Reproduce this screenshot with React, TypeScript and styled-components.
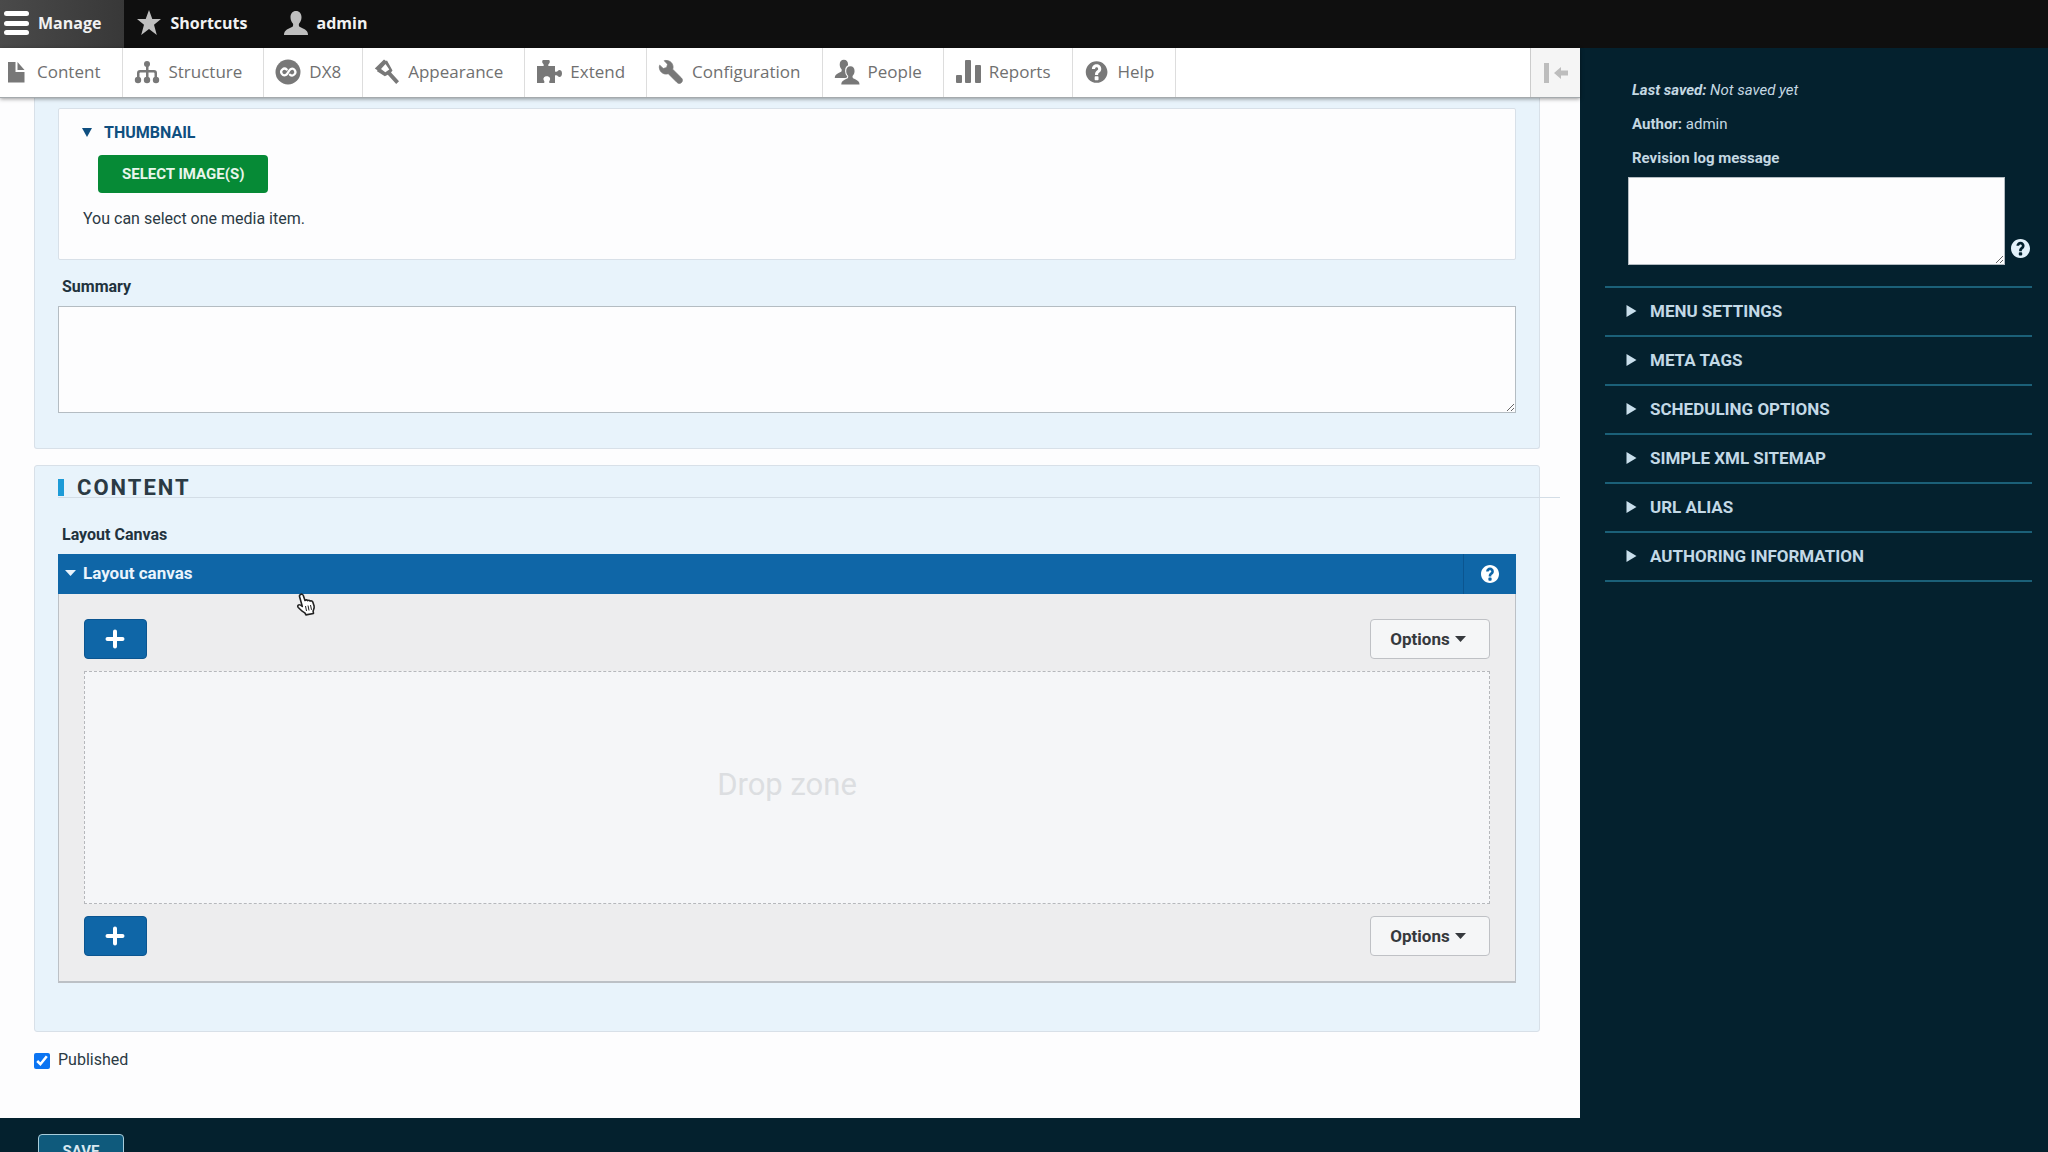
import React from "react";
import styled, { createGlobalStyle } from "styled-components";

const ui = `Roboto, "Liberation Sans", sans-serif`;
const toolbarFont = `"Open Sans", "Noto Sans", sans-serif`;

const GlobalStyle = createGlobalStyle`
  *, *::before, *::after { box-sizing: border-box; }
  body { margin: 0; background: #04212e; font-family: ${ui}; color: #2b3a44; }
  button, input, textarea { font: inherit; }
  h2, p { margin: 0; }
`;

const Shell = styled.div`
  display: grid;
  grid-template-rows: 48px minmax(0, 1fr);
  height: 100vh;
  overflow: hidden;
`;

const Bar = styled.nav`
  display: flex;
  background: #0f0f0f;
  font-family: ${toolbarFont};
`;

const Tab = styled.button<{ $active?: boolean }>`
  display: flex;
  align-items: center;
  gap: 8px;
  padding: 0 23px 2px ${(p) => (p.$active ? "4px" : "12px")};
  border: 0;
  background: ${(p) => (p.$active ? "linear-gradient(90deg, #4a4a4a, #383838)" : "transparent")};
  color: #f2f2f2;
  font-size: 16px;
  font-weight: 700;
`;

const Columns = styled.div`
  display: grid;
  grid-template-columns: minmax(0, 1fr) 468px;
  min-height: 0;
`;

const Left = styled.div`
  display: flex;
  flex-direction: column;
  min-width: 0;
`;

const Tray = styled.nav`
  display: flex;
  flex: none;
  height: 50px;
  background: #fff;
  border-bottom: 1px solid #a5aaad;
  box-shadow: 0 1px 4px rgba(0, 0, 0, 0.4);
  font-family: ${toolbarFont};
  z-index: 1;
`;

const TrayLink = styled.a<{ $first?: boolean }>`
  display: flex;
  align-items: center;
  gap: 8px;
  padding: ${(p) => (p.$first ? "0 22px 2px 3px" : "0 21px 2px 11px")};
  border-right: 1px solid #ddd;
  color: #707070;
  font-size: 17px;
  text-decoration: none;
`;

const Orientation = styled.button`
  display: grid;
  place-items: center;
  width: 50px;
  margin-left: auto;
  border: 0;
  border-left: 1px solid #ccc;
  background: #f5f5f5;
`;

const Page = styled.main`
  padding: 0 40px 48px 34px;
  background: #fdfdfe;
`;

const Group = styled.section<{ $continued?: boolean }>`
  padding: ${(p) => (p.$continued ? "10px 23px 35px" : "12px 23px 48px")};
  margin-bottom: ${(p) => (p.$continued ? "16px" : "18px")};
  border: 1px solid #d8e0e8;
  border-top-width: ${(p) => (p.$continued ? "0" : "1px")};
  border-radius: ${(p) => (p.$continued ? "0 0 3px 3px" : "3px")};
  background: #e8f3fb;
`;

const MediaBox = styled.details`
  height: 152px;
  padding: 13px 19px;
  border: 1px solid #d8e0e8;
  border-radius: 2px;
  background: #fdfdfe;
`;

const Summary = styled.summary<{ $light?: boolean }>`
  display: flex;
  align-items: center;
  list-style: none;
  text-transform: uppercase;
  font-weight: 700;
  font-size: ${(p) => (p.$light ? "17px" : "16px")};
  color: ${(p) => (p.$light ? "#c3d9e6" : "#0f4f80")};
  gap: ${(p) => (p.$light ? "13px" : "12px")};
  height: ${(p) => (p.$light ? "47px" : "20px")};
  padding: ${(p) => (p.$light ? "0 0 2px 21px" : "0 0 0 4px")};
  &::-webkit-details-marker { display: none; }
`;

const SelectButton = styled.button`
  display: block;
  height: 38px;
  margin: 13px 0 16px 20px;
  padding: 0 24px;
  border: 0;
  border-radius: 4px;
  background: #068a36;
  color: #e9f6ec;
  font-size: 15px;
  font-weight: 700;
  text-transform: uppercase;
`;

const Hint = styled.p`
  padding-left: 5px;
  font-size: 16px;
  line-height: 20px;
`;

const FieldLabel = styled.label`
  display: block;
  padding: 0 4px;
  font-size: 16px;
  line-height: 20px;
  font-weight: 700;
  color: #22323d;
`;

const SummaryField = styled.div`
  display: flex;
  flex-direction: column;
  gap: 9px;
  margin-top: 17px;
`;

const TextArea = styled.textarea<{ $height: number }>`
  display: block;
  width: 100%;
  height: ${(p) => p.$height}px;
  border: 1px solid #b4bcc2;
  border-radius: 0;
  background: #fdfdfe;
  resize: vertical;
`;

const Heading = styled.h2`
  display: flex;
  align-items: center;
  gap: 13px;
  height: 20px;
  margin: 0 -44px 27px 0;
  border-bottom: 1px solid #d3dde6;
  font-size: 22px;
  font-weight: 700;
  letter-spacing: 2px;
  color: #2b3a44;
  text-transform: uppercase;
  &::before { content: ""; width: 6px; height: 17px; background: #1d9bd7; }
`;

const CanvasHead = styled.div`
  display: flex;
  height: 40px;
  margin-top: 9px;
  background: #0f66a7;
`;

const CanvasToggle = styled.button`
  display: flex;
  flex: 1;
  align-items: center;
  gap: 7px;
  padding: 0 7px 2px;
  border: 0;
  background: none;
  color: #eaf4fc;
  font-size: 17px;
  font-weight: 700;
`;

const CanvasHelp = styled.button`
  display: grid;
  place-items: center;
  width: 53px;
  border: 0;
  border-left: 1px solid #0b5590;
  background: none;
`;

const CanvasBody = styled.div`
  position: relative;
  display: flex;
  flex-direction: column;
  gap: 12px;
  padding: 25px 25px;
  border: 1px solid #bcc0c5;
  border-top: 0;
  border-bottom-width: 2px;
  background: #ededee;
`;

const CanvasRow = styled.div`
  display: flex;
  justify-content: space-between;
`;

const AddButton = styled.button`
  display: grid;
  place-items: center;
  width: 63px;
  height: 40px;
  padding: 0 2px 0 0;
  border: 1px solid #0b5590;
  border-radius: 4px;
  background: #0f66a7;
`;

const OptionsButton = styled.button`
  display: flex;
  align-items: center;
  justify-content: center;
  gap: 5px;
  width: 120px;
  height: 40px;
  padding: 0 4px 0 0;
  border: 1px solid #bfc1c5;
  border-radius: 4px;
  background: #f5f6f7;
  color: #36393d;
  font-size: 17px;
  font-weight: 700;
`;

const DropZone = styled.div`
  display: grid;
  place-items: center;
  height: 233px;
  padding-bottom: 6px;
  border: 1px dashed #b6b8bc;
  background: #f5f6f8;
  color: #dcdee1;
  font-size: 31px;
`;

const Pointer = styled.svg`
  position: absolute;
  left: 236px;
  top: -1px;
`;

const Published = styled.label`
  display: flex;
  align-items: flex-start;
  gap: 8px;
  font-size: 16px;
  line-height: 20px;
  input { width: 16px; height: 16px; margin: 3px 0 0; accent-color: #0b74f2; }
`;

const Actions = styled.div`
  padding: 16px 38px;
`;

const SaveButton = styled.button`
  width: 86px;
  height: 34px;
  border: 1px solid #a9cddb;
  border-radius: 4px;
  background: #0f5a7c;
  color: #d8e8f0;
  font-size: 15px;
  font-weight: 700;
  text-transform: uppercase;
`;

const Side = styled.aside`
  padding: 32px 16px 0 25px;
  color: #c4d8e2;
  font-size: 15px;
  line-height: 20px;
`;

const Meta = styled.div`
  display: flex;
  flex-direction: column;
  gap: 14px;
  padding-left: 27px;
`;

const RevisionRow = styled.div`
  display: flex;
  align-items: flex-end;
  gap: 6px;
  margin: 9px 0 21px;
  padding: 0 2px 0 23px;
`;

const HelpIconButton = styled.button`
  display: grid;
  padding: 0;
  margin-bottom: 7px;
  border: 0;
  background: none;
`;

const Settings = styled.div`
  border-top: 2px solid #1b6078;
`;

const Setting = styled.details`
  border-bottom: 2px solid #1b6078;
`;

const Icon = ({ children, size = 26, color = "#787878" }: { children: React.ReactNode; size?: number; color?: string }) => (
  <svg width={size} height={size} viewBox="0 0 26 26" fill={color} aria-hidden="true">{children}</svg>
);

const person = "M13 1c3.400 0 5.500 2.600 5.500 6.200 0 2.800-1.100 4.700-2.200 6-.7.800-.6 2.800.2 3.500 1.500 1.100 5.500 2 7.200 4.300.8 1.100 1.300 2.300 1.300 4H1c0-1.700.5-2.900 1.300-4 1.700-2.300 5.700-3.200 7.200-4.300.8-.7.900-2.700.2-3.500-1.100-1.300-2.200-3.200-2.200-6C7.500 3.600 9.600 1 13 1z";

const icons = {
  menu: <g><rect x="0" y="1" width="25" height="5" rx="2.500" /><rect x="0" y="11" width="25" height="5" rx="2.500" /><rect x="0" y="20" width="25" height="5" rx="2.500" /></g>,
  star: <path d="M13 0l3.300 9H25l-7 5.700L20.800 25 13 19 5.200 25 8 14.700 1 9h8.700z" />,
  person: <path d={person} />,
  file: <path d="M5 3h7.500v10h9v10.500H5zM14.500 3l7 8h-7z" />,
  structure: <g><circle cx="13" cy="5" r="3" /><path d="M12 6h2.500v5H20a3 3 0 013 3v5h-2.500v-4.500c0-.6-.4-1-1-1h-5V19H12v-5.500H6.500c-.6 0-1 .4-1 1V19H3v-5a3 3 0 013-3h6z" /><circle cx="4" cy="21" r="3.200" /><circle cx="13" cy="21" r="3.200" /><circle cx="22" cy="21" r="3.200" /></g>,
  dx8: <g><circle cx="13" cy="13" r="12.500" /><path d="M11.800 10.600a3.300 3.300 0 10-.6 5.200c1.600-1 2.600-4.600 4.300-5.600a3.300 3.300 0 11-.6 5.400" fill="none" stroke="#fff" strokeWidth="2.200" strokeLinecap="round" /></g>,
  appearance: <path fillRule="evenodd" d="M.8 9.500L10 .5l2 1.600L13 1.500l5.500 10-1.500 2 8 8.700-2.800 2.800-8.400-9.200-3 1.500L3 12.200l.4-1zM11.500 5L7 10l4.300 3.300 4-2.800z" />,
  extend: <path d="M1 7h6.500c.6-1 .2-1.800-.8-2.800C6 3.500 6 1.200 7 1h6c1 .2 1 2.500.3 3.200-1 1-1.400 1.800-.8 2.800H19v5.500c1.200.7 2.200.3 3-.8.900-1.200 4-1 4 2.800s-3.100 4-4 2.800c-.8-1.100-1.800-1.500-3-.8V24h-5.500c-.6-1.100-.3-1.800.3-2.800.9-1.400 0-3.900-3-3.900s-3.900 2.500-3 3.900c.6 1 .9 1.700.3 2.800H1z" />,
  wrench: <path transform="translate(1 1) scale(1.560)" strokeWidth=".5" stroke="#787878" d="M14.416 11.586l-5.666-5.665c.15-.449.252-.921.252-1.421 0-2.485-2.016-4.200-4.502-4.200-.505 0-.681.002-1.134.155l2.131 2.231-.588 2.196-2.196.588L.468 3.325C.306 3.789.2 3.981.2 4.500.2 6.986 2.014 9 4.500 9c.5 0 .972-.102 1.421-.251l5.667 5.665c.781.781 2.047.781 2.828 0s.781-2.047 0-2.828z" />,
  people: <g><path transform="scale(.76)" d={person} /><path transform="translate(6.500 6.500) scale(.76)" d={person} stroke="#fdfdfd" strokeWidth="3" paintOrder="stroke" /></g>,
  reports: <g><rect x="1" y="16" width="6" height="8" rx="1" /><rect x="10" y="1" width="6" height="23" rx="1" /><rect x="20" y="6" width="6" height="18" rx="1" /></g>,
};

const helpPath = "M8.002 1c-3.868 0-7.002 3.134-7.002 7s3.134 7 7.002 7c3.865 0 7-3.134 7-7s-3.135-7-7-7zm3 5c0 .551-.16 1.085-.477 1.586l-.158.22c-.07.093-.189.241-.361.393-.168.148-.35.299-.545.447l-.203.189-.141.129-.096.17-.021.235v.63h-2.001v-.704c.026-.396.078-.73.204-.999.125-.269.271-.498.439-.688l.225-.21-.01-.015.176-.14.137-.128c.186-.139.357-.277.516-.417l.148-.18c.098-.152.168-.323.168-.518 0-.552-.447-1-1.001-1s-1.002.448-1.002 1h-2.001c0-1.657 1.343-3 3.002-3 1.656 0 3 1.343 3 3zm-1.750 6.619c0 .344-.281.625-.625.625h-1.250c-.345 0-.626-.281-.626-.625v-1.238c0-.344.281-.625.626-.625h1.250c.344 0 .625.281.625.625v1.238z";

const Help = ({ size, color }: { size: number; color: string }) => (
  <svg width={size} height={size} viewBox="1 1 14 14" fill={color} aria-hidden="true"><path d={helpPath} /></svg>
);

const Caret = ({ color, width = 11, height = 6 }: { color: string; width?: number; height?: number }) => (
  <svg width={width} height={height} viewBox="0 0 10 6" preserveAspectRatio="none" fill={color} aria-hidden="true"><path d="M0 0h10L5 6z" /></svg>
);

const menu: [string, keyof typeof icons | "help"][] = [
  ["Content", "file"],
  ["Structure", "structure"],
  ["DX8", "dx8"],
  ["Appearance", "appearance"],
  ["Extend", "extend"],
  ["Configuration", "wrench"],
  ["People", "people"],
  ["Reports", "reports"],
  ["Help", "help"],
];

const settings = ["Menu settings", "Meta tags", "Scheduling options", "Simple XML sitemap", "URL alias", "Authoring information"];

const Controls = () => (
  <CanvasRow>
    <AddButton type="button" aria-label="Add component">
      <svg width="20" height="20" viewBox="0 0 20 20" stroke="#fff" strokeWidth="4" strokeLinecap="round"><path d="M10 2.500v15M2.500 10h15" /></svg>
    </AddButton>
    <OptionsButton type="button">Options <Caret color="#36393d" /></OptionsButton>
  </CanvasRow>
);

export default function App() {
  return (
    <Shell>
      <GlobalStyle />
      <Bar>
        <Tab $active type="button"><Icon color="#fff">{icons.menu}</Icon>Manage</Tab>
        <Tab type="button"><Icon color="#bebebe">{icons.star}</Icon>Shortcuts</Tab>
        <Tab type="button"><Icon color="#bebebe">{icons.person}</Icon>admin</Tab>
      </Bar>
      <Columns>
        <Left>
          <Tray>
            {menu.map(([label, icon], i) => (
              <TrayLink key={label} href="#" $first={i === 0}>
                {icon === "help" ? <Icon><path transform="translate(.2 .6) scale(1.550)" d={helpPath} /></Icon> : <Icon>{icons[icon]}</Icon>}
                {label}
              </TrayLink>
            ))}
            <Orientation type="button" aria-label="Vertical orientation">
              <svg width="26" height="20" viewBox="0 0 26 20" fill="#bdbdbd"><path d="M1 0h5v20H1zM11 10l7-6v3.500h7v5h-7V16z" /></svg>
            </Orientation>
          </Tray>
          <Page>
            <Group $continued>
              <MediaBox open>
                <Summary><Caret color="#0f4f80" width={10} height={9} />Thumbnail</Summary>
                <SelectButton type="button">Select image(s)</SelectButton>
                <Hint>You can select one media item.</Hint>
              </MediaBox>
              <SummaryField>
                <FieldLabel htmlFor="summary">Summary</FieldLabel>
                <TextArea id="summary" $height={107} />
              </SummaryField>
            </Group>
            <Group>
              <Heading>Content</Heading>
              <FieldLabel as="div">Layout Canvas</FieldLabel>
              <CanvasHead>
                <CanvasToggle type="button"><Caret color="#eaf4fc" />Layout canvas</CanvasToggle>
                <CanvasHelp type="button" aria-label="Help"><Help size={18} color="#fff" /></CanvasHelp>
              </CanvasHead>
              <CanvasBody>
                <Pointer width="22" height="24" viewBox="0 0 22 24" fill="#fff" stroke="#222" strokeWidth="1.600" strokeLinejoin="round">
                  <path d="M5.500 1.500c1.300-.8 2.500 0 2.900 1.200L10 7.500c.8-.9 2-.8 2.600.2.900-.8 2-.6 2.500.4 1-.6 2.200-.2 2.700 1l1.300 3.800c.5 2-.5 3.800-1 5.200l.4 2.400-7.600 1.400-1-2c-2.200-1-4.400-3.200-6.600-5.400-.9-1-.6-1.900 0-2.400.9-.7 2-.3 4 1.300L4.500 3.500c-.3-1 .2-1.600 1-2z" />
                  <path d="M10.500 13l1 5M13 12.500l1 5M15.500 12l1 4.800" strokeWidth="1" />
                </Pointer>
                <Controls />
                <DropZone>Drop zone</DropZone>
                <Controls />
              </CanvasBody>
            </Group>
            <Published htmlFor="published"><input id="published" type="checkbox" defaultChecked />Published</Published>
          </Page>
          <Actions><SaveButton type="submit">Save</SaveButton></Actions>
        </Left>
        <Side>
          <Meta>
            <p><em><b>Last saved:</b> Not saved yet</em></p>
            <p><b>Author:</b> admin</p>
            <label htmlFor="revision"><b>Revision log message</b></label>
          </Meta>
          <RevisionRow>
            <TextArea id="revision" $height={88} />
            <HelpIconButton type="button" aria-label="Revision help"><Help size={19} color="#e3f1fa" /></HelpIconButton>
          </RevisionRow>
          <Settings>
            {settings.map((name) => (
              <Setting key={name}>
                <Summary $light>
                  <svg width="11" height="12" viewBox="0 0 10 12" fill="#c9dfec" aria-hidden="true"><path d="M0 0l10 6-10 6z" /></svg>
                  {name}
                </Summary>
              </Setting>
            ))}
          </Settings>
        </Side>
      </Columns>
    </Shell>
  );
}
